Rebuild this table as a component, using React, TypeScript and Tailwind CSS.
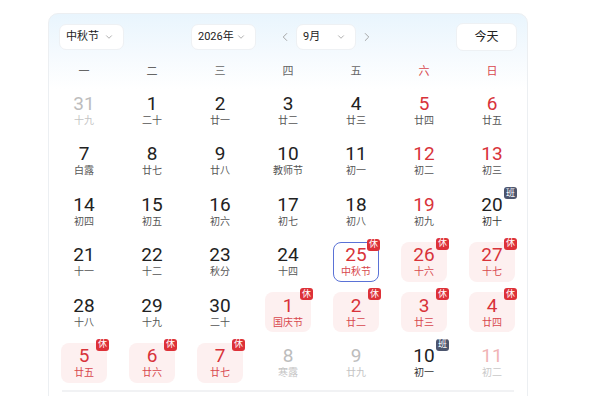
import { ChevronDown, ChevronLeft, ChevronRight } from "lucide-react";

type Kind = "normal" | "weekend" | "holiday" | "selected" | "work" | "muted" | "mutedRed";

type Day = { d: number; lunar: string; kind: Kind };

const weeks: Day[][] = [
  [
    { d: 31, lunar: "十九", kind: "muted" },
    { d: 1, lunar: "二十", kind: "normal" },
    { d: 2, lunar: "廿一", kind: "normal" },
    { d: 3, lunar: "廿二", kind: "normal" },
    { d: 4, lunar: "廿三", kind: "normal" },
    { d: 5, lunar: "廿四", kind: "weekend" },
    { d: 6, lunar: "廿五", kind: "weekend" },
  ],
  [
    { d: 7, lunar: "白露", kind: "normal" },
    { d: 8, lunar: "廿七", kind: "normal" },
    { d: 9, lunar: "廿八", kind: "normal" },
    { d: 10, lunar: "教师节", kind: "normal" },
    { d: 11, lunar: "初一", kind: "normal" },
    { d: 12, lunar: "初二", kind: "weekend" },
    { d: 13, lunar: "初三", kind: "weekend" },
  ],
  [
    { d: 14, lunar: "初四", kind: "normal" },
    { d: 15, lunar: "初五", kind: "normal" },
    { d: 16, lunar: "初六", kind: "normal" },
    { d: 17, lunar: "初七", kind: "normal" },
    { d: 18, lunar: "初八", kind: "normal" },
    { d: 19, lunar: "初九", kind: "weekend" },
    { d: 20, lunar: "初十", kind: "work" },
  ],
  [
    { d: 21, lunar: "十一", kind: "normal" },
    { d: 22, lunar: "十二", kind: "normal" },
    { d: 23, lunar: "秋分", kind: "normal" },
    { d: 24, lunar: "十四", kind: "normal" },
    { d: 25, lunar: "中秋节", kind: "selected" },
    { d: 26, lunar: "十六", kind: "holiday" },
    { d: 27, lunar: "十七", kind: "holiday" },
  ],
  [
    { d: 28, lunar: "十八", kind: "normal" },
    { d: 29, lunar: "十九", kind: "normal" },
    { d: 30, lunar: "二十", kind: "normal" },
    { d: 1, lunar: "国庆节", kind: "holiday" },
    { d: 2, lunar: "廿二", kind: "holiday" },
    { d: 3, lunar: "廿三", kind: "holiday" },
    { d: 4, lunar: "廿四", kind: "holiday" },
  ],
  [
    { d: 5, lunar: "廿五", kind: "holiday" },
    { d: 6, lunar: "廿六", kind: "holiday" },
    { d: 7, lunar: "廿七", kind: "holiday" },
    { d: 8, lunar: "寒露", kind: "muted" },
    { d: 9, lunar: "廿九", kind: "muted" },
    { d: 10, lunar: "初一", kind: "work" },
    { d: 11, lunar: "初二", kind: "mutedRed" },
  ],
];

const weekdays = ["一", "二", "三", "四", "五", "六", "日"];

function Select({ label, width }: { label: string; width: string }) {
  return (
    <div
      className={`${width} shrink-0 h-[26px] flex items-center justify-between pl-[6px] pr-[9px] bg-white rounded-[7px] border border-[#eef1f4] text-[11px] text-[#222] whitespace-nowrap`}
    >
      <span>{label}</span>
      <ChevronDown size={10} strokeWidth={1.6} className="text-[#888] shrink-0" />
    </div>
  );
}

function Cell({ day }: { day: Day }) {
  const numColor = {
    normal: "text-[#222]",
    work: "text-[#222]",
    weekend: "text-[#d8333a]",
    holiday: "text-[#d8333a]",
    selected: "text-[#d8333a]",
    muted: "text-[#bdbdbd]",
    mutedRed: "text-[#f0b4b6]",
  }[day.kind];
  const lunarColor = {
    normal: "text-[#555]",
    work: "text-[#333]",
    weekend: "text-[#555]",
    holiday: "text-[#d8474d]",
    selected: "text-[#d8474d]",
    muted: "text-[#c4c4c4]",
    mutedRed: "text-[#c9c9c9]",
  }[day.kind];
  const box =
    day.kind === "holiday"
      ? "bg-[#fdf0f0]"
      : day.kind === "selected"
        ? "border-[1.5px] border-[#5a72d6]"
        : "";
  const badge =
    day.kind === "holiday" || day.kind === "selected"
      ? "休"
      : day.kind === "work"
        ? "班"
        : null;

  return (
    <div className="flex justify-center">
      <div
        className={`relative w-[46px] h-[40px] rounded-[8px] flex flex-col items-center justify-center ${box}`}
      >
        <span className={`text-[19px] leading-[20px] ${numColor}`}>{day.d}</span>
        <span className={`text-[10px] leading-[12px] mt-[1px] whitespace-nowrap ${lunarColor}`}>
          {day.lunar}
        </span>
        {badge && (
          <span
            className={`absolute -top-[4px] -right-[2px] w-[13px] h-[12px] rounded-[3px] flex items-center justify-center text-[9px] leading-none text-white overflow-hidden ${
              badge === "休" ? "bg-[#dd3138]" : "bg-[#4c556e]"
            }`}
          >
            {badge}
          </span>
        )}
      </div>
    </div>
  );
}

export default function App() {
  return (
    <div
      className="w-[600px] h-[396px] overflow-hidden bg-white"
      style={{ fontFamily: "Roboto, 'Noto Sans CJK SC', sans-serif" }}
    >
      <div className="ml-[48px] mt-[13px] w-[480px] h-[400px] rounded-[10px] border border-[#eceff2] bg-[linear-gradient(180deg,#e9f5fd_0px,#f5fafe_40px,#ffffff_75px)]">
        <div className="flex items-center h-[28px] mt-[9px] pl-[10px] pr-[10px]">
          <Select label="中秋节" width="w-[65px]" />
          <div className="ml-[67px] shrink-0">
            <Select label="2026年" width="w-[65px]" />
          </div>
          <ChevronLeft size={14} strokeWidth={1.5} className="ml-[22px] text-[#999] shrink-0" />
          <div className="ml-[4px] shrink-0">
            <Select label="9月" width="w-[60px]" />
          </div>
          <ChevronRight size={14} strokeWidth={1.5} className="ml-[4px] text-[#999] shrink-0" />
          <div className="ml-auto shrink-0 w-[61px] h-[28px] rounded-[7px] bg-white border border-[#eef1f4] flex items-center justify-center text-[12px] text-[#222]">
            今天
          </div>
        </div>
        <div className="grid grid-cols-7 px-[1px] mt-[9px] h-[24px] items-center">
          {weekdays.map((w, i) => (
            <div
              key={w}
              className={`text-center text-[11px] ${i >= 5 ? "text-[#d8474d]" : "text-[#666]"}`}
            >
              {w}
            </div>
          ))}
        </div>
        <div className="grid grid-cols-7 px-[1px] mt-[6px] gap-y-[10.5px]">
          {weeks.flat().map((day, i) => (
            <Cell key={i} day={day} />
          ))}
        </div>
        <div className="mx-[13px] mt-[7px] h-[2px] bg-[#f1f2f4]" />
      </div>
    </div>
  );
}
